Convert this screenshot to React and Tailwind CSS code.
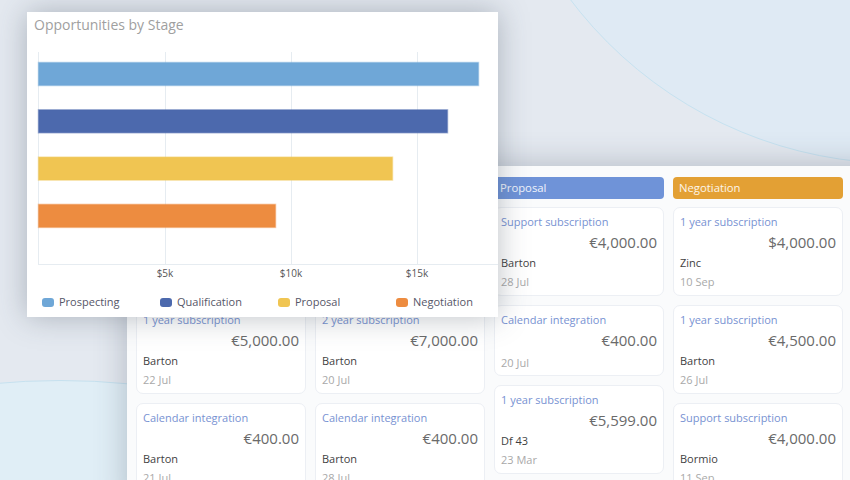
import React from 'react';

const font = { fontFamily: '"Open Sans", "Liberation Sans", sans-serif' };

// first cards of the two left columns sit under the chart card, so they are drawn empty
const columns = [
  {
    name: 'Prospecting',
    head: 'bg-[#6fa7d7]',
    cards: [
      { hidden: true },
      { title: '1 year subscription', amount: '€5,000.00', client: 'Barton', date: '22 Jul' },
      { title: 'Calendar integration', amount: '€400.00', client: 'Barton', date: '21 Jul' },
    ],
  },
  {
    name: 'Qualification',
    head: 'bg-[#4c69ad]',
    cards: [
      { hidden: true },
      { title: '2 year subscription', amount: '€7,000.00', client: 'Barton', date: '20 Jul' },
      { title: 'Calendar integration', amount: '€400.00', client: 'Barton', date: '28 Jul' },
    ],
  },
  {
    name: 'Proposal',
    head: 'bg-[#6f93d8]',
    cards: [
      { title: 'Support subscription', amount: '€4,000.00', client: 'Barton', date: '28 Jul' },
      { title: 'Calendar integration', amount: '€400.00', date: '20 Jul' },
      { title: '1 year subscription', amount: '€5,599.00', client: 'Df 43', date: '23 Mar' },
    ],
  },
  {
    name: 'Negotiation',
    head: 'bg-[#e3a034]',
    cards: [
      { title: '1 year subscription', amount: '$4,000.00', client: 'Zinc', date: '10 Sep' },
      { title: '1 year subscription', amount: '€4,500.00', client: 'Barton', date: '26 Jul' },
      { title: 'Support subscription', amount: '€4,000.00', client: 'Bormio', date: '11 Sep' },
    ],
  },
];

const bars = [
  { w: 440, color: '#6fa7d7' },
  { w: 409, color: '#4c69ad' },
  { w: 354, color: '#f0c552' },
  { w: 237, color: '#ed8c40' },
];

const legend = [
  { label: 'Prospecting', color: 'bg-[#6fa7d7]' },
  { label: 'Qualification', color: 'bg-[#4c69ad]' },
  { label: 'Proposal', color: 'bg-[#f0c552]' },
  { label: 'Negotiation', color: 'bg-[#ed8c40]' },
];

function DealCard({ card }) {
  if (card.hidden) {
    return <div className="h-[89px] bg-white rounded-[7px] border border-[#eceff4]" />;
  }
  return (
    <div className={`bg-white rounded-[7px] border border-[#eceff4] px-[6px] pt-[6px] ${card.client ? 'pb-[5px]' : 'pb-[4px]'}`}>
      <div className="text-[11px] leading-[16px] text-[#7892d2]">{card.title}</div>
      <div className="mt-[2px] text-right text-[15px] leading-[20px] text-[#6a6a6a]">{card.amount}</div>
      {card.client && (
        <div className="mt-[3px] text-[11px] leading-[16px] text-[#3f3f3f]">{card.client}</div>
      )}
      <div className={`${card.client ? 'mt-[3px]' : 'mt-[5px]'} text-[11px] leading-[16px] text-[#a9a9a9]`}>{card.date}</div>
    </div>
  );
}

export default function App() {
  return (
    <div className="relative w-[850px] h-[480px] overflow-hidden bg-[#e4e9f0]" style={font}>
      {/* decorative circles */}
      <div className="absolute left-[486px] top-[-664px] w-[828px] h-[828px] rounded-full bg-[#dfeaf4] border border-[#c6e2f0]" />
      <div className="absolute left-[-640px] top-[380px] w-[1400px] h-[1400px] rounded-full bg-[#e0eef6] border border-[#c6e1ef]" />

      {/* kanban board */}
      <div className="absolute left-[127px] top-[166px] w-[760px] h-[340px] bg-[#fafbfc] shadow-[0_0_30px_rgba(60,70,85,0.3)] pl-[9px] pt-[11px]">
        <div className="grid grid-cols-[170px_170px_170px_170px] gap-x-[9px]">
          {columns.map((col) => (
            <div key={col.name} className="flex flex-col gap-[8px]">
              <div className={`${col.head} h-[22px] rounded-[4px] pl-[6px] text-[11.3px] leading-[22px] text-white/90`}>
                {col.name}
              </div>
              <div className="flex flex-col gap-[9px]">
                {col.cards.map((c, i) => (
                  <DealCard key={i} card={c} />
                ))}
              </div>
            </div>
          ))}
        </div>
      </div>

      {/* chart card */}
      <div className="absolute left-[27px] top-[12px] w-[471px] h-[305px] bg-white shadow-[0_0_28px_rgba(60,70,85,0.34)]">
        <div className="pl-[7px] pt-[3px] text-[14px] leading-[20px] text-[#a0a0a0]">Opportunities by Stage</div>
        <svg className="absolute left-0 top-0" width="471" height="256" viewBox="0 0 471 256">
          {[11, 138, 264, 390].map((x) => (
            <line key={x} x1={x + 0.5} y1="40" x2={x + 0.5} y2="252" stroke="#e6ecf1" strokeWidth="1" />
          ))}
          <line x1="11" y1="252.5" x2="471" y2="252.5" stroke="#e6ecf1" strokeWidth="1" />
          {bars.map((b, i) => (
            <rect
              key={i}
              x="11.5"
              y={50.5 + i * 47.3}
              width={b.w}
              height="23"
              fill={b.color}
              stroke={b.color}
              strokeOpacity="0.45"
              strokeWidth="1.5"
            />
          ))}
        </svg>
        <div className="absolute left-0 top-[254px] w-full h-[14px] text-[10px] leading-[14px] text-[#555]">
          {[['$5k', 'left-[120px]'], ['$10k', 'left-[246px]'], ['$15k', 'left-[372px]']].map(([t, pos]) => (
            <span key={t} className={`absolute ${pos} w-[36px] text-center`}>{t}</span>
          ))}
        </div>
        <div className="absolute left-[15px] top-[283px] flex">
          {legend.map((l) => (
            <div key={l.label} className="w-[118px] flex items-center gap-[5px]">
              <span className={`${l.color} w-[12px] h-[9px] rounded-[3px]`} />
              <span className="text-[11px] leading-[14px] text-[#565668]">{l.label}</span>
            </div>
          ))}
        </div>
      </div>
    </div>
  );
}
